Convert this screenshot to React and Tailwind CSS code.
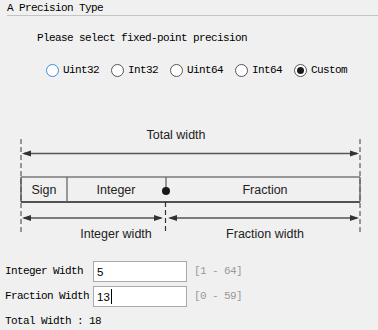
import React from "react";

const mono = { fontFamily: '"Liberation Mono", "DejaVu Sans Mono", monospace' };

function Radio({ label, state }) {
  return (
    <div className="flex items-center mr-[12px]">
      <div
        className={
          "w-[13px] h-[13px] rounded-full bg-white border flex items-center justify-center " +
          (state === "hover" ? "border-[#3c8ce0]" : "border-[#555555]")
        }
      >
        {state === "checked" && <div className="w-[7px] h-[7px] rounded-full bg-[#1a1a1a]" />}
      </div>
      <span className="ml-[4px] text-[11px] tracking-[-0.6px] leading-[14px] text-black" style={mono}>
        {label}
      </span>
    </div>
  );
}

function Diagram() {
  const sans = '"Liberation Sans", Arial, sans-serif';
  const fs = "12.5";
  return (
    <svg width="378" height="168" viewBox="0 77 378 168" className="block">
      <line x1="21" y1="139" x2="21" y2="234" stroke="#707070" strokeWidth="1.4" strokeDasharray="5 3" />
      <line x1="360" y1="139" x2="360" y2="234" stroke="#707070" strokeWidth="1.4" strokeDasharray="5 3" />
      <line x1="165.5" y1="202" x2="165.5" y2="234" stroke="#333" strokeWidth="1.2" strokeDasharray="5 3" />
      <line x1="24" y1="153.5" x2="357" y2="153.5" stroke="#555" strokeWidth="1.5" />
      <polygon points="22,153.5 31,150.5 31,156.5" fill="#333" />
      <polygon points="359,153.5 350,150.5 350,156.5" fill="#333" />
      <text x="176" y="139" textAnchor="middle" fontSize={fs} fill="#222" fontFamily={sans}>Total width</text>
      <line x1="21" y1="177" x2="360" y2="177" stroke="#7a7a7a" strokeWidth="1.4" />
      <line x1="21" y1="202" x2="360" y2="202" stroke="#1e1e1e" strokeWidth="1.3" />
      <line x1="21" y1="177" x2="21" y2="202" stroke="#555" strokeWidth="1.4" />
      <line x1="360" y1="177" x2="360" y2="202" stroke="#666" strokeWidth="1.4" />
      <line x1="67" y1="177" x2="67" y2="202" stroke="#666" strokeWidth="1.3" />
      <line x1="166" y1="177" x2="166" y2="191" stroke="#666" strokeWidth="1.3" />
      <circle cx="166" cy="191" r="4" fill="#1a1a1a" />
      <text x="44" y="194" textAnchor="middle" fontSize={fs} fill="#222" fontFamily={sans}>Sign</text>
      <text x="116" y="194" textAnchor="middle" fontSize={fs} fill="#222" fontFamily={sans}>Integer</text>
      <text x="265" y="194" textAnchor="middle" fontSize={fs} fill="#222" fontFamily={sans}>Fraction</text>
      <line x1="24" y1="218" x2="161" y2="218" stroke="#555" strokeWidth="1.5" />
      <polygon points="22,218 31,215 31,221" fill="#333" />
      <polygon points="163,218 154,215 154,221" fill="#333" />
      <line x1="170" y1="218" x2="357" y2="218" stroke="#555" strokeWidth="1.5" />
      <polygon points="168,218 177,215 177,221" fill="#333" />
      <polygon points="359,218 350,215 350,221" fill="#333" />
      <text x="116" y="238" textAnchor="middle" fontSize={fs} fill="#222" fontFamily={sans}>Integer width</text>
      <text x="265" y="238" textAnchor="middle" fontSize={fs} fill="#222" fontFamily={sans}>Fraction width</text>
    </svg>
  );
}

function Field({ label, value, range, caret }) {
  return (
    <div className="flex items-center h-[21px]">
      <div className="w-[88px] text-[11px] tracking-[-0.6px] text-black" style={mono}>{label}</div>
      <div className="w-[94px] h-[21px] bg-white border border-[#a9a9a9] flex items-center pl-[3px]">
        <span className="text-[11.5px] text-black leading-[14px]" style={{ fontFamily: '"Liberation Sans", Arial, sans-serif' }}>
          {value}
        </span>
        {caret && <span className="w-px h-[15px] bg-black ml-[1px]" />}
      </div>
      <div className="ml-[7px] text-[11px] tracking-[-0.6px] text-[#9a9a9a]" style={mono}>{range}</div>
    </div>
  );
}

export default function App() {
  return (
    <div className="w-[378px] h-[330px] bg-[#f0f0f0] overflow-hidden">
      <div className="ml-[7px] h-[16px] border-b border-[#c4c4c4] pt-[2px]">
        <span className="text-[11px] tracking-[-0.6px] leading-[13px] text-black block" style={mono}>
          A Precision Type
        </span>
      </div>
      <div className="mt-[15px] ml-[37px] text-[11px] tracking-[-0.6px] leading-[14px] text-black" style={mono}>
        Please select fixed-point precision
      </div>
      <div className="mt-[18px] ml-[46px] flex items-center h-[14px]">
        <Radio label="Uint32" state="hover" />
        <Radio label="Int32" />
        <Radio label="Uint64" />
        <Radio label="Int64" />
        <Radio label="Custom" state="checked" />
      </div>
      <Diagram />
      <div className="mt-[16px] ml-[5px] flex flex-col gap-[4px]">
        <Field label="Integer Width" value="5" range="[1 - 64]" />
        <Field label="Fraction Width" value="13" range="[0 - 59]" caret />
      </div>
      <div className="mt-[7px] ml-[5px] text-[11px] tracking-[-0.6px] leading-[14px] text-black" style={mono}>
        Total Width : 18
      </div>
    </div>
  );
}
